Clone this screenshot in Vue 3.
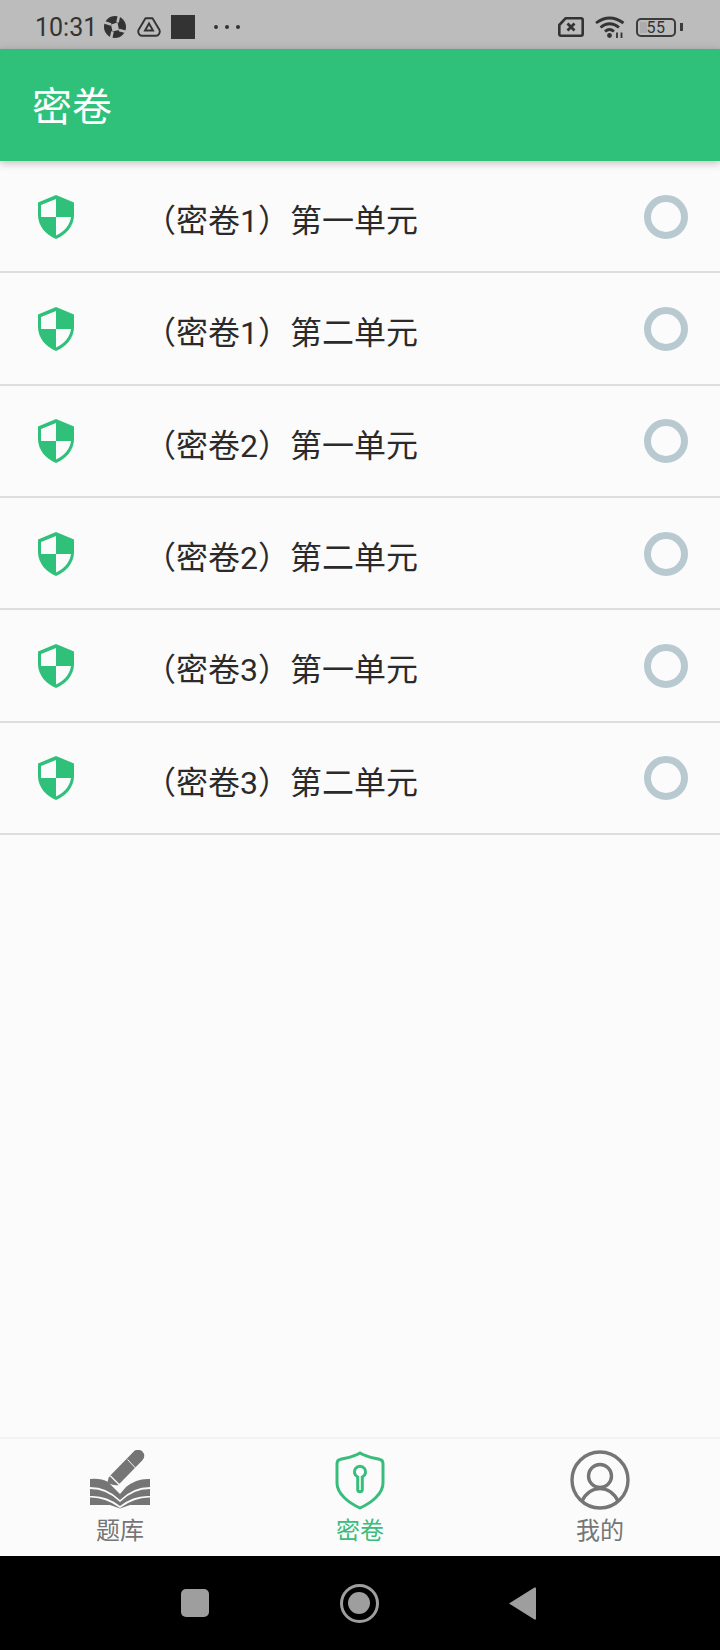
<script setup>
const papers = [
  '（密卷1）第一单元',
  '（密卷1）第二单元',
  '（密卷2）第一单元',
  '（密卷2）第二单元',
  '（密卷3）第一单元',
  '（密卷3）第二单元'
]
</script>

<template>
  <div class="page">
    <div class="status-bar">
      <span class="time">10:31</span>
      <svg class="st-pin" width="24" height="24" viewBox="0 0 24 24">
        <circle cx="12" cy="12" r="11" fill="#333" />
        <path d="M8 9.5 L14.5 7.5 L16 15 L9.5 16.5 Z" fill="#bcbcbc" />
        <path d="M0.5 7 L8 9.5 M16 0.5 L14.5 7.5 M23.5 17 L16 15 M8 23.5 L9.5 16.5" stroke="#bcbcbc" stroke-width="2.6" />
      </svg>
      <svg class="st-tri" width="24" height="20" viewBox="0 0 24 20" fill="none" stroke="#333">
        <path d="M8.5 1.2 H15.5 L22.5 13 Q23.2 15 22 17 Q21 18.8 19 18.8 H5 Q3 18.8 2 17 Q0.8 15 1.5 13 Z" stroke-width="1.9" stroke-linejoin="round" />
        <path d="M12 6.5 L16 13.5 H8 Z" stroke-width="1.9" />
      </svg>
      <span class="st-square"></span>
      <span class="st-dots"><i></i><i></i><i></i></span>
      <div class="status-right">
        <svg width="26" height="20" viewBox="0 0 26 20" fill="none">
          <path d="M7.5 1.3 H23 Q24.7 1.3 24.7 3 V17 Q24.7 18.7 23 18.7 H3 Q1.3 18.7 1.3 17 V8 Z" stroke="#333" stroke-width="2.6" stroke-linejoin="round" />
          <path d="M9.5 6.5 L16.5 13.5 M16.5 6.5 L9.5 13.5" stroke="#333" stroke-width="2.8" />
        </svg>
        <svg width="30" height="22" viewBox="0 0 30 22" fill="none" stroke="#333" stroke-width="2.8">
          <path d="M1 7 Q14.5 -3 28.5 7" />
          <path d="M5.5 11.5 Q14.5 4 24 11.5" />
          <path d="M10 15.5 Q14.5 11.5 19 15.5" />
          <circle cx="14.5" cy="19.5" r="2.4" fill="#333" stroke="none" />
          <path d="M22 16.5 V22 M26.5 16.5 V22" stroke-width="1.8" />
        </svg>
        <div class="battery">
          <div class="battery-body"><span class="battery-fill"></span><span class="battery-num">55</span></div>
          <span class="battery-tip"></span>
        </div>
      </div>
    </div>

    <header class="app-bar">密卷</header>

    <main class="list">
      <div v-for="(name, i) in papers" :key="i" class="row">
        <svg class="row-shield" width="36" height="44" viewBox="0 0 36 44">
          <path d="M18 0 L36 7.5 V20 C36 31 28 40 18 44 C8 40 0 31 0 20 V7.5 Z" fill="#2fc17a" />
          <path d="M18 4 V22 H3 V10 Z M18 22 H33 C32 30 26 37 18 40.5 Z" fill="#fbfbfb" />
        </svg>
        <span class="row-text">{{ name }}</span>
        <span class="radio"></span>
      </div>
    </main>

    <nav class="tabs">
      <div class="tab">
        <svg width="60" height="60" viewBox="0 0 60 60">
          <path d="M48 6 L25.5 29" stroke="#757575" stroke-width="12.5" stroke-linecap="round" />
          <path d="M37.5 9.5 L45.5 18" stroke="#fbfbfb" stroke-width="1" />
          <path d="M19 26.5 L28.5 35.5 L19.5 34 L17.5 32 Z" fill="#757575" />
          <path d="M20.5 26 L29.5 35" stroke="#fbfbfb" stroke-width="1.2" />
          <path d="M0 29 Q11 28 18 32 L21 35 L30 44 L36 37 Q47 28 60 29 V37 Q43 37 30 50 Q17 37 0 37 Z" fill="#757575" />
          <path d="M0 39 Q17 39 30 52 Q43 39 60 39 V46 Q44 45 30 56 Q16 45 0 46 Z" fill="#757575" />
          <path d="M0 47.5 Q15 47 30 58 Q45 47 60 47.5 V55 H40 L30 58.5 L20 55 H0 Z" fill="#757575" />
        </svg>
        <span class="tab-label">题库</span>
      </div>
      <div class="tab active">
        <svg width="60" height="60" viewBox="0 0 60 60" fill="none" stroke="#38bd7c" stroke-width="3">
          <path d="M30 3 C36 7 44 8 50 9.5 Q53 10 53 14 V33 C53 44 41 53 30 58 C19 53 7 44 7 33 V14 Q7 10 10 9.5 C16 8 24 7 30 3 Z" />
          <path d="M27.7 27 A5.6 5.6 0 1 1 32.3 27 V39.5 A2.3 2.3 0 0 1 27.7 39.5 Z" />
        </svg>
        <span class="tab-label">密卷</span>
      </div>
      <div class="tab">
        <svg width="60" height="60" viewBox="0 0 60 60" fill="none" stroke="#757575" stroke-width="3.4">
          <circle cx="30" cy="30" r="28" />
          <circle cx="30" cy="26" r="11.5" />
          <path d="M12 51 C16 43 23 38.5 30 38.5 C37 38.5 44 43 48 51" />
        </svg>
        <span class="tab-label">我的</span>
      </div>
    </nav>

    <footer class="sys-nav">
      <span class="sys-square"></span>
      <span class="sys-home"><i></i></span>
      <svg width="27" height="33" viewBox="0 0 27 33"><path d="M0 16.5 L25.5 0.5 Q27 0 27 1.5 V31.5 Q27 33 25.5 32.5 Z" fill="#9e9e9e" /></svg>
    </footer>
  </div>
</template>

<style scoped>
.page {
  height: 1650px;
  display: flex;
  flex-direction: column;
  background: #fbfbfb;
  font-family: "Noto Sans CJK SC", "Noto Sans", sans-serif;
  overflow: hidden;
}

.status-bar {
  height: 49px;
  flex: none;
  box-sizing: border-box;
  background: #bcbcbc;
  display: flex;
  align-items: center;
  padding: 5px 37px 0 35px;
  color: #333;
}

.time {
  font-family: Roboto, sans-serif;
  font-size: 25px;
}

.st-pin {
  margin-left: 6px;
}

.st-tri {
  margin-left: 10px;
}

.st-square {
  width: 24px;
  height: 24px;
  background: #333;
  margin-left: 10px;
}

.st-dots {
  display: flex;
  gap: 7px;
  margin-left: 19px;
}

.st-dots i {
  width: 4px;
  height: 4px;
  border-radius: 50%;
  background: #333;
}

.status-right {
  margin-left: auto;
  display: flex;
  align-items: center;
  gap: 11px;
}

.battery {
  display: flex;
  align-items: center;
  gap: 4px;
}

.battery-body {
  width: 40px;
  height: 19px;
  box-sizing: border-box;
  border: 2px solid #3c3c3c;
  border-radius: 5px;
  position: relative;
  display: flex;
  align-items: center;
  justify-content: center;
}

.battery-fill {
  position: absolute;
  left: 2px;
  top: 2px;
  bottom: 2px;
  width: 7px;
  background: #acacac;
}

.battery-num {
  position: relative;
  font-family: Roboto, sans-serif;
  font-size: 16px;
  letter-spacing: 0.5px;
  color: #333;
}

.battery-tip {
  width: 3px;
  height: 8px;
  background: #3c3c3c;
}

.app-bar {
  height: 112px;
  flex: none;
  background: #2fc17a;
  color: #fff;
  font-size: 40px;
  line-height: 110px;
  padding-left: 32px;
  box-shadow: 0 2px 8px rgba(0, 0, 0, 0.25);
  position: relative;
}

.list {
  flex: 1;
}

.row {
  height: 112.33px;
  box-sizing: border-box;
  border-bottom: 2px solid #dedede;
  display: flex;
  align-items: center;
  padding: 0 32px 0 38px;
}

.row-shield {
  flex: none;
  margin-top: 1px;
}

.row-text {
  margin-left: 70px;
  font-family: Roboto, "Noto Sans CJK SC", sans-serif;
  font-size: 32px;
  color: #2a2a2a;
  position: relative;
  top: 2px;
}

.radio {
  width: 44px;
  height: 44px;
  box-sizing: border-box;
  border: 7px solid #b8c9d0;
  border-radius: 50%;
  margin-left: auto;
  margin-top: 1px;
}

.tabs {
  height: 119px;
  flex: none;
  box-sizing: border-box;
  border-top: 2px solid #f2f2f2;
  display: flex;
  padding-top: 11px;
}

.tab {
  flex: 1;
  display: flex;
  flex-direction: column;
  align-items: center;
  color: #757575;
}

.tab.active {
  color: #38bd7c;
}

.tab-label {
  font-size: 24px;
  line-height: 30px;
  margin-top: 4px;
}

.sys-nav {
  height: 94px;
  flex: none;
  background: #000;
  display: flex;
  align-items: center;
  padding: 0 184px 0 181px;
  justify-content: space-between;
}

.sys-square {
  width: 28px;
  height: 28px;
  border-radius: 5px;
  background: #9e9e9e;
}

.sys-home {
  width: 39px;
  height: 39px;
  box-sizing: border-box;
  border: 3px solid #9e9e9e;
  border-radius: 50%;
  display: flex;
  align-items: center;
  justify-content: center;
}

.sys-home i {
  width: 22px;
  height: 22px;
  border-radius: 50%;
  background: #9e9e9e;
}
</style>
